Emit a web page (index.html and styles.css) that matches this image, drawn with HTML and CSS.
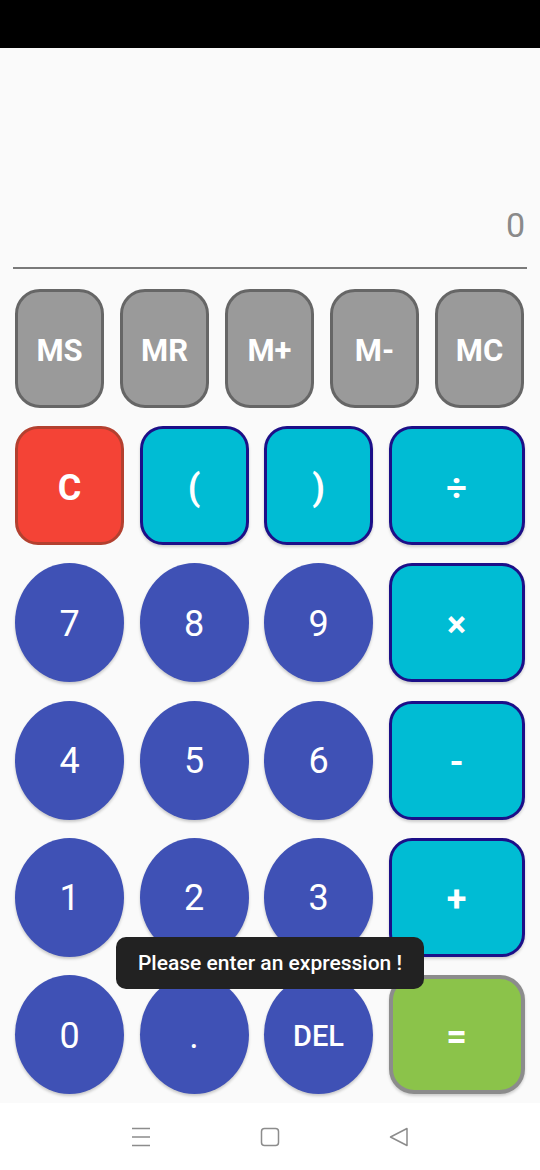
FILE: index.html
```html
<!DOCTYPE html>
<html>
<head>
<meta charset="utf-8">
<link rel="stylesheet" href="styles.css">
</head>
<body>
<div class="status"></div>
<main class="app">
  <div class="display"><span class="result">0</span></div>
  <div class="divider"></div>
  <div class="memory">
    <button class="key mem">MS</button>
    <button class="key mem">MR</button>
    <button class="key mem">M+</button>
    <button class="key mem">M-</button>
    <button class="key mem">MC</button>
  </div>
  <div class="pad">
    <button class="key clear">C</button>
    <button class="key op">(</button>
    <button class="key op">)</button>
    <button class="key op">÷</button>
    <button class="key num">7</button>
    <button class="key num">8</button>
    <button class="key num">9</button>
    <button class="key op">×</button>
    <button class="key num">4</button>
    <button class="key num">5</button>
    <button class="key num">6</button>
    <button class="key op">-</button>
    <button class="key num">1</button>
    <button class="key num">2</button>
    <button class="key num">3</button>
    <button class="key op">+</button>
    <button class="key num">0</button>
    <button class="key num">.</button>
    <button class="key num del">DEL</button>
    <button class="key eq">=</button>
  </div>
  <div class="toast">Please enter an expression !</div>
</main>
<nav class="nav">
  <svg class="navicon" viewBox="0 0 20 20" width="20" height="20"><path d="M1 1.5H19M1 10H19M1 18.5H19" stroke="#8c8c8c" stroke-width="1.4" fill="none"/></svg>
  <svg class="navicon" viewBox="0 0 20 20" width="20" height="20"><rect x="1.5" y="1.5" width="17" height="17" rx="3" stroke="#8c8c8c" stroke-width="1.5" fill="none"/></svg>
  <svg class="navicon" viewBox="0 0 20 20" width="20" height="20"><path d="M18 1.5V18.5L1.5 10Z" stroke="#8c8c8c" stroke-width="1.5" fill="none" stroke-linejoin="round"/></svg>
</nav>
</body>
</html>
```
FILE: styles.css
```css
* { box-sizing: border-box; }
html, body { margin: 0; padding: 0; }
body {
  width: 540px;
  height: 1170px;
  overflow: hidden;
  font-family: Roboto, "Noto Sans", sans-serif;
  background: #fafafa;
}
.status { height: 48px; background: #000; }
.app {
  position: relative;
  height: 1055px;
  background: #fafafa;
  padding: 0 15px;
}
.display {
  height: 219px;
  display: flex;
  justify-content: flex-end;
  align-items: flex-end;
  padding-bottom: 22px;
}
.result {
  font-size: 34px;
  line-height: 40px;
  color: #8a8a8a;
}
.divider {
  height: 2px;
  background: #7a7a7a;
  margin: 0 -2px 0 -2px;
}
.memory {
  display: flex;
  gap: 16px;
  margin-top: 20px;
}
.key {
  font-family: Roboto, "Noto Sans", sans-serif;
  color: #fff;
  border: none;
  padding: 0;
  margin: 0;
  display: flex;
  align-items: center;
  justify-content: center;
  height: 119px;
}
.mem {
  width: 89px;
  background: #9a9a9a;
  border: 3px solid #666;
  border-radius: 25px;
  font-size: 31px;
  font-weight: 700;
  padding-top: 4px;
}
.pad {
  display: grid;
  grid-template-columns: 109px 109px 109px 136px;
  grid-auto-rows: 119px;
  column-gap: 15.5px;
  row-gap: 18.3px;
  margin-top: 18px;
}
.clear {
  background: #f44336;
  border: 3px solid #b3402f;
  border-radius: 23px;
  font-size: 36px;
  font-weight: 700;
  padding-top: 4px;
}
.op {
  background: #00bcd4;
  border: 3px solid #1c0f88;
  border-radius: 23px;
  font-size: 36px;
  font-weight: 700;
  padding-top: 4px;
  box-shadow: 0 2px 3px rgba(0,0,0,0.18);
}
.num {
  background: #3f51b5;
  border-radius: 50%;
  font-size: 36px;
  font-weight: 400;
  padding-top: 2px;
  box-shadow: 0 2px 3px rgba(0,0,0,0.2);
}
.del { font-size: 29px; font-weight: 500; }
.eq {
  background: #8bc34a;
  border: 4px solid #8c8c8c;
  border-radius: 25px;
  font-size: 36px;
  font-weight: 700;
  padding-top: 4px;
  box-shadow: 0 2px 3px rgba(0,0,0,0.18);
}
.toast {
  position: absolute;
  left: 116px;
  top: 889px;
  width: 308px;
  height: 52px;
  background: #222;
  border-radius: 10px;
  color: #fff;
  font-size: 21px;
  font-weight: 500;
  display: flex;
  align-items: center;
  justify-content: center;
}
.nav {
  height: 67px;
  background: #fff;
  display: flex;
  justify-content: center;
  align-items: center;
  gap: 109px;
}
.navicon { display: block; }
```
